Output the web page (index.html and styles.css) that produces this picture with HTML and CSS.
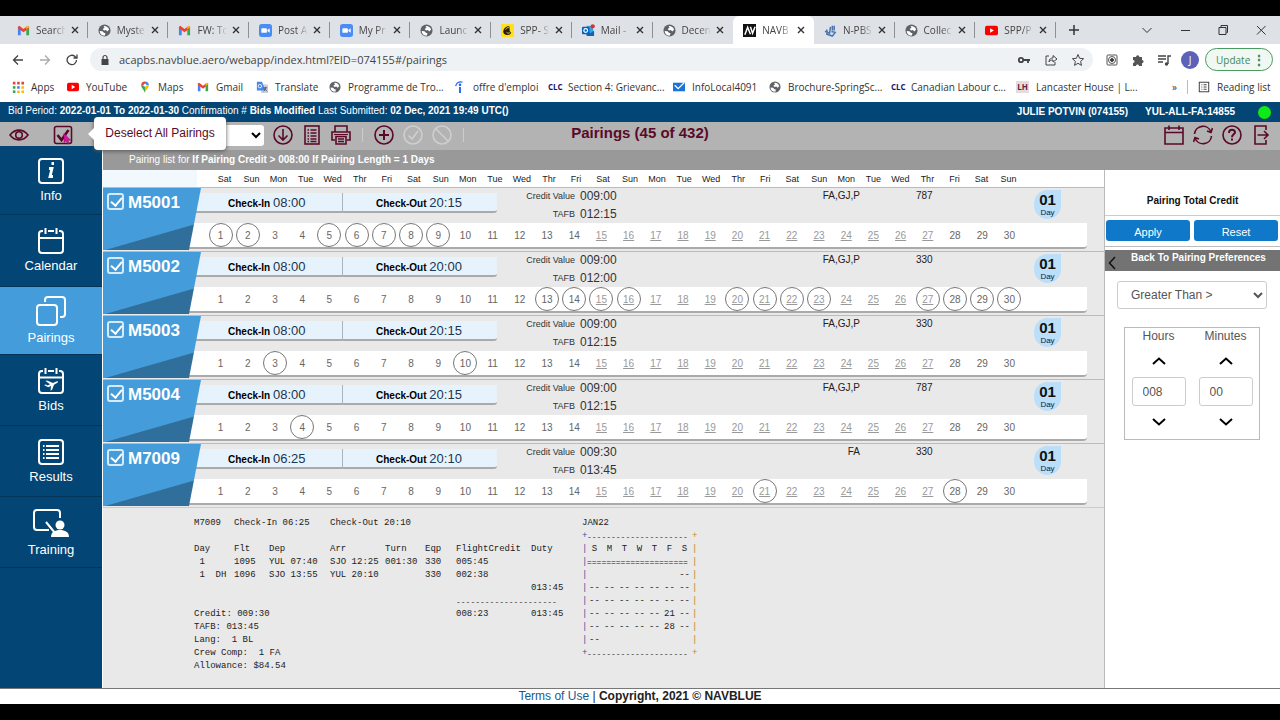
FILE: index.html
```html
<!DOCTYPE html>
<html lang="en">
<head>
<meta charset="utf-8">
<title>NAVBLUE PBS - Pairings</title>
<link rel="stylesheet" href="styles.css">
</head>
<body>
<svg class="defs" aria-hidden="true">
  <symbol id="gmail" viewBox="0 0 14 14"><path d="M1 12V3.500L4 6v6z" fill="#4285f4"/><path d="M10 12V6l3-2.500V12z" fill="#34a853"/><path d="M1 4.500V3l1.500-1L7 5.500 11.500 2 13 3v1.500L7 9z" fill="#ea4335"/><path d="M10 6l3-2.500V3l-1.500-1L10 3z" fill="#fbbc04"/></symbol>
  <symbol id="globe" viewBox="0 0 14 14"><circle cx="7" cy="7" r="6.500" fill="#5f6368"/><path d="M1.800 7.500l3 .3 1.500 1.700 1.700.5-.5 2.500C4 12.500 2 11 1.800 7.500zM6 2.200c2-.6 5 .8 6 3.800L10 8 8.500 6.500 6.500 7 5 5.500 7 4z" fill="#fff"/></symbol>
  <symbol id="zoomcam" viewBox="0 0 14 14"><rect x="0" y="0" width="14" height="14" rx="3" fill="#4a8cf6"/><rect x="2.500" y="4.500" width="6" height="5" rx="1" fill="#fff"/><path d="M9 6.500l2.500-2v5L9 7.500z" fill="#fff"/></symbol>
  <symbol id="youtube" viewBox="0 0 14 14"><rect x="0" y="2" width="14" height="10" rx="2" fill="#f00"/><path d="M5.500 4.500L9.500 7l-4 2.500z" fill="#fff"/></symbol>
  <symbol id="chimp" viewBox="0 0 14 14"><rect width="14" height="14" rx="1" fill="#ffe01b"/><path d="M9 2.500c-3-1-6 2-6.500 5C2 10 4 12 7 11.800c2.500 0 4-1.800 4-3L9.500 8z" fill="#241c15"/><path d="M5 6c1-2 2.500-2.500 3.500-2M6 9c1 1.200 3 1 4 0" stroke="#ffe01b" fill="none"/></symbol>
  <symbol id="outlook" viewBox="0 0 14 14"><path d="M5 2h7v10H5z" fill="#28a8ea"/><path d="M5 7l4 3 4-3v6H5z" fill="#1066b5"/><rect y="3" width="8" height="8" rx="1" fill="#0a5fb8"/><circle cx="4" cy="7" r="2" fill="none" stroke="#fff" stroke-width="1.300"/><circle cx="11.500" cy="2.500" r="2.300" fill="#d13438"/></symbol>
  <symbol id="nav" viewBox="0 0 14 14"><rect width="14" height="14" fill="#111"/><path d="M2 11.500L5 3.500l3 7.500M8 3l2.300 7L13 3" fill="none" stroke="#fff" stroke-width="1.600"/></symbol>
  <symbol id="npbs" viewBox="0 0 14 14"><path d="M1 8l5 2 1-7M3 6v5l6 2 3-4-4-1M9 2v5M11 2v5" fill="none" stroke="#4a74b0" stroke-width="1.600"/></symbol>
  <symbol id="chev-up" viewBox="0 0 16 10"><path d="M2 8l6-5.500L14 8" fill="none" stroke="currentColor" stroke-width="2"/></symbol>
  <symbol id="chev-down" viewBox="0 0 16 10"><path d="M2 2l6 5.500L14 2" fill="none" stroke="currentColor" stroke-width="2"/></symbol>
</svg>

<header class="browser">
  <div class="tabstrip">
    <div class="tabs" id="tabs"></div>
    <button class="newtab" aria-label="New tab"><svg viewBox="0 0 10 10"><path d="M5 0v10M0 5h10" stroke="#333" stroke-width="1.500"/></svg></button>
    <div class="window-controls">
      <svg viewBox="0 0 12 12"><path d="M1.500 4L6 8.500 10.500 4" /></svg>
      <svg viewBox="0 0 12 12"><path d="M2 6.500h9"/></svg>
      <svg viewBox="0 0 12 12"><path d="M2 3.500h7v7H2zM4 3V1.500h6.500v7H9.500"/></svg>
      <svg viewBox="0 0 12 12"><path d="M2 2l8.500 8.500M10.500 2L2 10.500"/></svg>
    </div>
  </div>
  <div class="addressbar">
    <button class="nav-btn" aria-label="Back"><svg viewBox="0 0 12 12"><path d="M11 6H1.500M6 1.500L1.500 6 6 10.500"/></svg></button>
    <button class="nav-btn off" aria-label="Forward"><svg viewBox="0 0 12 12"><path d="M1 6h9.500M6 1.500L10.500 6 6 10.500"/></svg></button>
    <button class="nav-btn" aria-label="Reload"><svg viewBox="0 0 12 12"><path d="M10.500 6A4.700 4.700 0 1 1 9 2.500L10.500 4M11 .5V4H7.500"/></svg></button>
    <div class="omnibox">
      <svg class="lock" viewBox="0 0 10 12"><path d="M1.500 5h7v6h-7z" fill="#444"/><path d="M3 5V3.500a2 2 0 0 1 4 0V5" fill="none" stroke="#444" stroke-width="1.200"/></svg>
      <input aria-label="Address" value="acapbs.navblue.aero/webapp/index.html?EID=074155#/pairings">
      <svg viewBox="0 0 14 14"><circle cx="4" cy="7" r="2.200" stroke-width="1.800"/><path d="M6.500 7H13M11 7v3" stroke-width="1.800"/></svg>
      <svg viewBox="0 0 14 14"><path d="M5 3H2v9h9V9M5 9c0-3 2-4 4-4V2.500L13 6 9 9V7C7 7 6 7.500 5 9z"/></svg>
      <svg viewBox="0 0 14 14"><path d="M7 1.500l1.600 3.800 4 .4-3 2.700.9 4L7 10.300l-3.500 2.100.9-4-3-2.700 4-.4z"/></svg>
    </div>
    <div class="extensions">
      <svg viewBox="0 0 14 14"><rect x="2" y="2" width="10" height="10" rx="1" stroke="#555"/><circle cx="7" cy="7" r="3.500" stroke="#555"/><circle cx="7" cy="7" r="1.500" fill="#333"/></svg>
      <svg viewBox="0 0 14 14"><path d="M2 4h3a1.700 1.700 0 1 1 3.400 0H11v3a1.600 1.600 0 1 1 0 3.200V13H8c0-2-3-2-3 0H2v-3c2 0 2-3 0-3z" fill="#555" stroke="none"/></svg>
      <svg viewBox="0 0 14 14"><path d="M1 3h8M1 6h8M1 9h5M11 11V3h3" stroke-width="1.400"/><circle cx="9.500" cy="11" r="1.700" fill="#444" stroke="none"/></svg>
    </div>
    <span class="avatar">J</span>
    <button class="update">Update <span class="dots">⋮</span></button>
  </div>
  <nav class="bookmarks" aria-label="Bookmarks">
    <a href="#"><svg viewBox="0 0 14 14"><g fill="#ea4335"><path d="M1 1h3v3H1zM6 1h3v3H6zM11 1h3v3h-3z"/></g><path d="M1 6h3v3H1z" fill="#34a853"/><path d="M6 6h3v3H6z" fill="#4285f4"/><path d="M11 6h3v3h-3zM6 11h3v3H6zM11 11h3v3h-3z" fill="#fbbc04"/><path d="M1 11h3v3H1z" fill="#34a853"/></svg>Apps</a>
    <a href="#"><svg><use href="#youtube"/></svg>YouTube</a>
    <a href="#"><svg viewBox="0 0 14 14"><path d="M7 14C6 10 2.500 8.500 2.500 5L7 5z" fill="#34a853"/><path d="M2.500 5A4.500 4.500 0 0 1 7 .5V5z" fill="#ea4335"/><path d="M7 .5A4.500 4.500 0 0 1 11.500 5H7z" fill="#4285f4"/><path d="M11.500 5C11.500 8.500 8 10 7 14V5z" fill="#fbbc04"/><circle cx="7" cy="5" r="1.700" fill="#fff"/></svg>Maps</a>
    <a href="#"><svg><use href="#gmail"/></svg>Gmail</a>
    <a href="#"><svg viewBox="0 0 14 14"><rect x="6" y="4" width="8" height="10" rx="1" fill="#c9ced6"/><path d="M1 1h6l4 10H1z" fill="#4a86e8"/><circle cx="4.500" cy="6" r="2" fill="none" stroke="#fff"/><path d="M9 8h4M11 7v1c0 2-1 3-2 4M10 9l3 3" stroke="#456" fill="none"/></svg>Translate</a>
    <a href="#"><svg><use href="#globe"/></svg>Programme de Tro...</a>
    <a href="#"><svg viewBox="0 0 14 14"><circle cx="7" cy="4.500" r="1.500" fill="#2164f3"/><path d="M7 7v7" stroke="#2164f3" stroke-width="2.200"/><path d="M2 6c.5-4 4-6 8-4.500" fill="none" stroke="#2164f3" stroke-width="1.400"/></svg>offre d'emploi</a>
    <a href="#"><span class="clc">CLC</span>Section 4: Grievanc...</a>
    <a href="#"><svg viewBox="0 0 14 14"><path d="M0 2h14v10H0z" fill="#1a73d9"/><path d="M2 5l4 4 7-7" fill="none" stroke="#fff" stroke-width="1.500"/></svg>InfoLocal4091</a>
    <a href="#"><svg><use href="#globe"/></svg>Brochure-SpringSc...</a>
    <a href="#"><span class="clc">CLC</span>Canadian Labour c...</a>
    <a href="#"><span class="lh">LH</span>Lancaster House | L...</a>
    <span class="more">»</span>
    <a class="reading" href="#"><svg viewBox="0 0 14 14"><path d="M1.500 1.500h11v11h-11zM4 4.500h1M6.500 4.500H10M4 7h1M6.500 7H10M4 9.500h1M6.500 9.500H10" fill="none" stroke="#444" stroke-width="1.200"/></svg>Reading list</a>
  </nav>
</header>

<div class="bidbar">
  <p>Bid Period: <b>2022-01-01 To 2022-01-30</b> Confirmation # <b>Bids Modified</b> Last Submitted: <b>02 Dec, 2021 19:49 UTC()</b></p>
  <p class="user"><b>JULIE POTVIN (074155)</b><b>YUL-ALL-FA:14855</b><span class="status"></span></p>
</div>

<div class="toolbar">
  <div class="tools">
    <button class="tool eye" aria-label="View"><svg viewBox="0 0 20 20"><path d="M1 10c5-6.500 13-6.500 18 0-5 6.500-13 6.500-18 0z"/><circle cx="10" cy="10" r="3.300"/></svg></button>
    <div class="deselect">
      <button class="tool" aria-label="Deselect All Pairings"><svg viewBox="0 0 20 20"><rect x="1.500" y="1.500" width="17" height="17" rx="2"/><path d="M4.500 10l4 5 7-10" stroke-width="2.600"/><path d="M11 8.500v9l2.200-1.800 1.600 3.300 1.500-.8-1.500-3h2.700z" fill="#e010a8" stroke="#7a0c50" stroke-width=".5"/></svg></button>
      <div class="tip" role="tooltip">Deselect All Pairings</div>
    </div>
    <select class="tool-select" aria-label="Sort"><option></option></select>
    <button class="tool" aria-label="Download"><svg viewBox="0 0 20 20"><circle cx="10" cy="10" r="9"/><path d="M10 4v11M5.500 10.500L10 15l4.500-4.500"/></svg></button>
    <button class="tool" aria-label="List"><svg viewBox="0 0 20 20"><rect x="3" y="1" width="14" height="18"/><path d="M5.500 5h1.500M8.500 5h6M5.500 8h1.500M8.500 8h6M5.500 11h1.500M8.500 11h6M5.500 14h1.500M8.500 14h6M5.500 16.500h1.500M8.500 16.500h6" stroke-width="1.500"/></svg></button>
    <button class="tool" aria-label="Print"><svg viewBox="0 0 20 20"><path d="M4 7V1h12v6M4 15H1V7h18v8h-3M5 11.500h10V19H5zM7 14h6M7 16.500h6"/><path d="M3 9.500h14" stroke-width="1"/></svg></button>
    <i class="sep"></i>
    <button class="tool" aria-label="Add"><svg viewBox="0 0 20 20"><circle cx="10" cy="10" r="9"/><path d="M10 5v10M5 10h10" stroke-width="2"/></svg></button>
    <button class="tool off" disabled aria-label="Approve"><svg viewBox="0 0 20 20"><circle cx="10" cy="10" r="9"/><path d="M5.500 10.500L9 14l6-8"/></svg></button>
    <button class="tool off" disabled aria-label="Cancel"><svg viewBox="0 0 20 20"><circle cx="10" cy="10" r="9"/><path d="M4 4l12 12"/></svg></button>
    <i class="sep"></i>
  </div>
  <h1>Pairings (45 of 432)</h1>
  <div class="tools right">
    <button class="tool" aria-label="Calendar"><svg viewBox="0 0 20 20"><path d="M1 3h18v16H1zM1 7.500h18M5 .5V5M15 .5V5"/></svg></button>
    <button class="tool" aria-label="Refresh"><svg viewBox="0 0 20 20"><path d="M1.500 9A8.500 8.500 0 0 1 18 7M19.500 3L18 7.500 14 6M18.500 11A8.500 8.500 0 0 1 2 13M.5 17L2 12.500 6 14"/></svg></button>
    <button class="tool" aria-label="Help"><svg viewBox="0 0 20 20"><circle cx="10" cy="10" r="9"/><path d="M7 8c0-4.500 6-4 6-.8 0 2-3 2.300-3 5" stroke-width="2"/><path d="M10 13.500v2" stroke-width="2"/></svg></button>
    <button class="tool" aria-label="Log out"><svg viewBox="0 0 20 20"><path d="M15 5V1H4v18h11v-4M6.500 10H17M13 6l4 4-4 4"/></svg></button>
  </div>
</div>

<div class="app">
  <nav class="sidebar" aria-label="Sections">
    <a href="#"><svg viewBox="0 0 26 26"><rect x="1" y="1" width="24" height="24" rx="3"/><path d="M11 10.500h3l-2 8h3" stroke-width="2.800"/><path d="M13.500 5.500h2.500" stroke-width="3"/></svg>Info</a>
    <a href="#"><svg viewBox="0 0 26 26"><path d="M5 3H4a3 3 0 0 0-3 3v16a3 3 0 0 0 3 3h18a3 3 0 0 0 3-3V6a3 3 0 0 0-3-3h-1M10 3h6M1 10h24M7.500 0v6M18.500 0v6"/></svg>Calendar</a>
    <a href="#" class="active"><svg class="wide" viewBox="0 0 30 30"><rect x="1" y="9" width="20" height="20" rx="3"/><path d="M9 6V4a3 3 0 0 1 3-3h14a3 3 0 0 1 3 3v14a3 3 0 0 1-3 3h-2"/></svg>Pairings</a>
    <a href="#"><svg viewBox="0 0 26 26"><path d="M5 3H4a3 3 0 0 0-3 3v16a3 3 0 0 0 3 3h18a3 3 0 0 0 3-3V6a3 3 0 0 0-3-3h-1M10 3h6M1 9.500h24M7.500 0v6M18.500 0v6"/><path d="M6 17l2-.5 1.500 1 2.500-1.200L7.500 13l1.500-.6 6 2.500c1.500-.8 4.500-2.400 5-1.500s-2.500 2.400-4 3.300L14 22l-1.500.5.500-4.500-2.800 1.300z" fill="#fff" stroke="none"/></svg>Bids</a>
    <a href="#"><svg viewBox="0 0 26 26"><rect x="1" y="1" width="24" height="24" rx="3"/><path d="M5 7h1.500M8 7h13M5 11h1.500M8 11h13M5 15h1.500M8 15h13M5 19h1.500M8 19h13"/></svg>Results</a>
    <a href="#"><svg class="board" viewBox="0 0 38 30"><path d="M17 22H5a3 3 0 0 1-3-3V5a3 3 0 0 1 3-3h20a3 3 0 0 1 3 3v5M14 14l9 11"/><circle cx="28" cy="17" r="4.500" fill="#fff" stroke="none"/><path d="M19 29c0-5 4-7 9-7s9 2 9 7z" fill="#fff" stroke="none"/></svg>Training</a>
  </nav>

  <main class="content">
    <p class="filter">Pairing list for <b>If Pairing Credit &gt; 008:00 If Pairing Length = 1 Days</b></p>
    <div class="split">
      <section class="pairings">
        <div class="weekdays" id="weekdays"></div>
        <div id="rows"></div>
        <div class="detail">
          <table class="legs">
            <colgroup><col class="w40"><col class="w35"><col class="w61"><col class="w55"><col class="w40"><col class="w31"><col class="w75"><col class="w51"></colgroup>
            <tr><td>M7009</td><td colspan="2">Check-In 06:25</td><td colspan="5">Check-Out 20:10</td></tr>
            <tr><td colspan="8">&nbsp;</td></tr>
            <tr><td>Day</td><td>Flt</td><td>Dep</td><td>Arr</td><td>Turn</td><td>Eqp</td><td>FlightCredit</td><td>Duty</td></tr>
            <tr><td> 1</td><td>1095</td><td>YUL 07:40</td><td>SJO 12:25</td><td>001:30</td><td>330</td><td>005:45</td><td></td></tr>
            <tr><td> 1  DH</td><td>1096</td><td>SJO 13:55</td><td>YUL 20:10</td><td></td><td>330</td><td>002:38</td><td></td></tr>
            <tr><td colspan="7"></td><td>013:45</td></tr>
            <tr><td colspan="6"></td><td colspan="2" class="rule">---------------------</td></tr>
            <tr><td colspan="6">Credit: 009:30</td><td>008:23</td><td>013:45</td></tr>
            <tr><td colspan="8">TAFB: 013:45</td></tr>
            <tr><td colspan="8">Lang:  1 BL</td></tr>
            <tr><td colspan="8">Crew Comp:  1 FA</td></tr>
            <tr><td colspan="8">Allowance: $84.54</td></tr>
          </table>
          <table class="month" id="month">
            <caption>JAN22</caption>
          </table>
        </div>
      </section>
      <aside class="panel">
        <h2>Pairing Total Credit</h2>
        <div class="actions"><button>Apply</button><button>Reset</button></div>
        <button class="back"><svg viewBox="0 0 8 14"><path d="M7 1L1.500 7 7 13" fill="none" stroke="#111" stroke-width="1.500"/></svg><span>Back To Pairing Preferences</span></button>
        <select class="compare" aria-label="Comparison"><option>Greater Than &gt;</option></select>
        <div class="clock">
          <div class="unit">
            <label for="hours">Hours</label>
            <button aria-label="More hours"><svg><use href="#chev-up"/></svg></button>
            <input id="hours" value="008">
            <button aria-label="Fewer hours"><svg><use href="#chev-down"/></svg></button>
          </div>
          <div class="unit">
            <label for="minutes">Minutes</label>
            <button aria-label="More minutes"><svg><use href="#chev-up"/></svg></button>
            <input id="minutes" value="00">
            <button aria-label="Fewer minutes"><svg><use href="#chev-down"/></svg></button>
          </div>
        </div>
      </aside>
    </div>
  </main>
</div>
<footer class="footer"><a href="#">Terms of Use</a> | <b>Copyright, 2021 © NAVBLUE</b></footer>
<script src="script.js"></script>
</body>
</html>
```

FILE: styles.css
```css
* { box-sizing: border-box; }

body {
  margin: 0;
  padding: 16px 0;
  min-height: 100vh;
  display: flex;
  flex-direction: column;
  background: #000;
  color: #222;
  font-family: "Liberation Sans", Arial, sans-serif;
  font-size: 10px;
}

p, h1, h2, dl, dd { margin: 0; }
button { padding: 0; border: 0; background: none; font: inherit; color: inherit; }
a { color: inherit; text-decoration: none; }
svg { display: block; flex: none; }
.defs { position: absolute; width: 0; height: 0; }

/* Browser window */
.browser { background: #fff; font-family: "Open Sans", "Noto Sans", sans-serif; color: #444; }
.tabstrip { display: flex; align-items: center; height: 28px; background: #dee1e6; padding-left: 7px; }
.tabs { display: flex; flex: 1; min-width: 0; height: 28px; align-items: stretch; }
.tab { flex: 1 1 0; min-width: 0; display: flex; align-items: center; padding: 0 9px 0 10px; position: relative; }
.tab svg { width: 13px; height: 13px; }
.tab .label {
  flex: 1; min-width: 0; margin: 0 5px 0 6px; overflow: hidden; white-space: nowrap;
  -webkit-mask-image: linear-gradient(90deg, #000 60%, transparent);
  mask-image: linear-gradient(90deg, #000 60%, transparent);
}
.tab .close svg { width: 8px; height: 8px; }
.tab::after { content: ""; position: absolute; right: 0; top: 6px; height: 16px; width: 1px; background: #8d9196; }
.tab.active { background: #fff; border-radius: 6px 6px 0 0; }
.tab.active::after, .tab:has(+ .active)::after { display: none; }
.newtab { flex: none; width: 36px; display: flex; justify-content: center; }
.newtab svg { width: 10px; height: 10px; }
.window-controls { flex: none; width: 188px; display: flex; justify-content: flex-end; gap: 26px; padding-right: 13px; }
.window-controls svg { width: 12px; height: 12px; fill: none; stroke: #333; }

.addressbar { display: flex; align-items: center; height: 31px; padding: 0 7px 0 12px; }
.nav-btn { width: 12px; margin-right: 15px; }
.nav-btn svg { width: 12px; height: 12px; fill: none; stroke: #444; stroke-width: 1.3; }
.nav-btn.off svg { stroke: #aaa; }
.omnibox { flex: 1; display: flex; align-items: center; gap: 13px; height: 23px; padding: 0 8px 0 10px; margin-left: -3px; border-radius: 12px; background: #eff2f4; }
.omnibox svg, .extensions svg { width: 14px; height: 14px; fill: none; stroke: #444; }
.omnibox svg.lock { width: 10px; height: 12px; margin-right: -4px; stroke: none; }
.omnibox input { flex: 1; min-width: 0; padding: 0; border: 0; background: none; font: inherit; font-size: 11px; color: #444; }
.extensions { display: flex; gap: 12px; margin: 0 10px 0 12px; }
.avatar { width: 18px; height: 18px; border-radius: 50%; background: #5c62b8; color: #fff; text-align: center; line-height: 18px; }
.update { display: flex; align-items: center; justify-content: space-between; width: 68px; height: 23px; margin-left: 6px; padding: 0 6px 0 10px; border: 1px solid #4a9a60; border-radius: 12px; background: #f1f8f3; color: #3d8a52; }
.update .dots { font-weight: bold; font-size: 14px; line-height: 14px; }

.bookmarks {
  display: grid; align-items: center; height: 27px; padding: 0 0 4px 12px;
  grid-template-columns: 55px 72px 58px 59px 73px 125px 94px 125px 96px 122px 125px 156px 1fr 83px;
  color: #333; white-space: nowrap;
}
.bookmarks a { display: flex; align-items: center; gap: 7px; }
.bookmarks svg { width: 12px; height: 12px; }
.clc, .lh { flex: none; width: 13px; font-size: 8px; font-weight: bold; line-height: 12px; }
.clc { color: #1c1470; }
.lh { background: #e4dde0; color: #6b2238; text-align: center; }
.bookmarks .reading { border-left: 1px solid #bbb; margin-left: -10px; padding-left: 10px; }

/* Application header */
.bidbar { display: flex; justify-content: space-between; height: 20px; padding: 0 9px 0 8px; line-height: 18px; background: #034574; color: #fff; white-space: nowrap; }
.user { display: flex; align-items: center; gap: 17px; }
.status { width: 13px; height: 13px; margin-left: 6px; border-radius: 50%; background: #10e818; }

.toolbar { display: grid; grid-template-columns: 1fr auto 1fr; height: 28px; background: #b3b3b3; color: #5a0a28; }
.toolbar h1 { font-size: 15px; line-height: 22px; }
.tools { display: flex; align-items: flex-start; padding: 3px 0 0 9px; gap: 9px; }
.tools.right { justify-content: flex-end; padding-right: 9px; }
.tool svg { width: 20px; height: 20px; fill: none; stroke: #5a0a28; stroke-width: 1.6; }
.tool.off svg { stroke: #cfcfcf; }
.deselect { position: relative; margin-left: 15px; }
.tip {
  position: absolute; left: 41px; top: -8px; z-index: 5; width: 132px; height: 33px;
  border-radius: 4px; background: #fff; box-shadow: 0 1px 4px #555;
  font-size: 12px; line-height: 32px; text-align: center; white-space: nowrap;
}
.tip::before { content: ""; position: absolute; left: -6px; top: 10px; border: 7px solid transparent; border-left: 0; border-right-color: #fff; }
.tool-select { width: 169px; height: 21px; margin-left: 13px; border: 0; border-radius: 3px; background: #fff; font-size: 13px; }
.sep { width: 1px; height: 14px; margin: 3px 2px 0; background: #ccc; }

/* Body layout */
.app { flex: 1; display: flex; background: #e9e9e9; }
.sidebar {
  position: relative; z-index: 1; flex: none; width: 102px; margin-top: -4px;
  display: grid; grid-template-rows: 69px 72px 68px 71px 71px 71px; align-content: start;
  background: #034574; color: #fff; font-size: 13px;
}
.sidebar a { display: flex; flex-direction: column; align-items: center; justify-content: center; gap: 4px; border-bottom: 1px solid #033459; line-height: 15px; }
.sidebar a.active { background: #459cdb; }
.sidebar svg { width: 26px; height: 26px; fill: none; stroke: #fff; stroke-width: 2; }
.sidebar svg.wide { width: 30px; height: 30px; }
.sidebar svg.board { width: 38px; height: 30px; }
.content { flex: 1; min-width: 0; display: flex; flex-direction: column; border-left: 1px solid #fff; }
.filter { height: 20px; padding-left: 26px; background: #999; color: #fff; line-height: 20px; }
.split { flex: 1; display: flex; }
.pairings { flex: 1; min-width: 0; }

.weekdays {
  display: grid; grid-template-columns: repeat(30, 1fr); height: 17px; padding: 0 82px 0 108px; text-align: center;
  background: linear-gradient(90deg, #f1f9fe 94px, #fff 94px); font-size: 9px; line-height: 18px;
}

/* Pairing rows */
.row { display: flex; height: 64px; border-top: 1px solid #bbb; }
.tag {
  position: relative; z-index: 1; flex: none; display: flex; align-items: flex-start; gap: 4px;
  width: 98px; height: 62px; padding: 5px 0 0 4px; color: #fff;
  font-size: 17px; font-weight: bold; line-height: 20px;
  clip-path: polygon(0 0, 100% 0, 86px 100%, 0 100%);
  background: linear-gradient(164deg, #459cdb 69%, #306f9c 70%);
}
.tag input { appearance: none; position: relative; width: 17px; height: 17px; margin: 0; border: 2px solid #d6ebfa; border-radius: 3px; }
.tag input:checked::after { content: ""; position: absolute; left: 4px; top: 0; width: 5px; height: 9px; border: solid #fff; border-width: 0 2px 2px 0; transform: rotate(40deg); }
.info { flex: 1; min-width: 0; margin-left: -12px; }
.summary { display: flex; height: 35px; }
.times { display: grid; grid-template-columns: 154px 1fr; width: 308px; height: 20px; margin-top: 5px; background: #e6f3fd; border-bottom: 2px solid #aaa; border-radius: 0 0 3px 0; line-height: 19px; color: #000; }
.times span { padding-left: 33px; }
.times span:first-child { padding-left: 39px; border-right: 1px solid #aab4bd; }
.times time { font-size: 13px; color: #1c3550; }
.credit { display: grid; grid-template-columns: 78px auto; gap: 2px 5px; align-content: start; line-height: 16px; color: #333; }
.credit dt { text-align: right; font-size: 9px; }
.credit dd { font-size: 12px; }
.crew { flex: 1; text-align: right; line-height: 16px; }
.craft { width: 118px; margin-left: 56px; line-height: 16px; }
.badge { width: 27px; height: 29px; margin: 2px 43px 0 0; border-radius: 14px 0 14px 14px; background: #bbdff8; text-align: center; font-size: 8px; line-height: 7px; color: #123; }
.badge b { display: block; font-size: 15px; line-height: 19px; color: #111; }
.days {
  display: grid; grid-template-columns: repeat(30, 1fr); height: 26px; margin-right: 17px; padding: 0 64px 0 18px;
  background: #fff; border-bottom: 2px solid #aaa; border-radius: 0 0 4px 0; color: #666; align-items: center; justify-items: center;
}
.days > * { width: 24px; height: 24px; line-height: 26px; text-align: center; }
.days u { color: #999; }
.days .ring { border: 1px solid #777; border-radius: 50%; line-height: 24px; }

/* Pairing detail */
.detail { display: flex; padding: 9px 0 14px 91px; border-top: 1px solid #ccc; color: #222; font-family: "Liberation Mono", monospace; font-size: 9px; line-height: 13px; white-space: pre; }
.detail table { border-collapse: collapse; table-layout: fixed; align-self: flex-start; }
.detail td { height: 13px; padding: 0; }
.detail .rule { font-size: 8px; }
.legs { width: 388px; }
.w31 { width: 31px; } .w35 { width: 35px; } .w40 { width: 40px; } .w51 { width: 51px; }
.w55 { width: 55px; } .w61 { width: 61px; } .w75 { width: 75px; }
.month { width: 115px; }
.month caption { text-align: left; }
.month col { width: 15px; }
.month col.side { width: 5px; }
.month .date { text-align: center; }
.month .left { color: #4550a0; }
.month .right { color: #b88a20; }

/* Preference panel */
.panel { flex: none; width: 176px; border-left: 1px solid #bbb; background: #fff; }
.panel::before { content: ""; display: block; height: 17px; }
.panel h2 { height: 29px; border-bottom: 1px solid #ccc; text-align: center; font-size: 10px; line-height: 28px; color: #111; }
.actions { display: grid; grid-template-columns: 1fr 1fr; gap: 4px; padding: 4px 2px 5px 1px; border-bottom: 1px solid #bbb; }
.actions button { height: 21px; border-radius: 3px; background: #0f78c8; color: #fff; font-size: 11px; line-height: 24px; }
.back { display: flex; gap: 12px; width: 100%; height: 21px; margin-top: 3px; padding-left: 3px; background: #737373; color: #fff; font-weight: bold; line-height: 15px; }
.back svg { width: 8px; height: 14px; margin: 6px 3px 0 0; }
.compare { display: block; width: 150px; height: 28px; margin: 10px 0 0 12px; padding-left: 9px; border: 1px solid #ccc; border-radius: 3px; background: #fff; font: inherit; font-size: 12px; color: #555; }
.clock { display: grid; grid-template-columns: 1fr 1fr; margin: 18px 20px 0 19px; border: 1px solid #bbb; }
.unit { display: flex; flex-direction: column; align-items: center; color: #555; font-size: 12px; line-height: 16px; }
.unit button { height: 18px; margin: 8px 0 7px; display: flex; align-items: center; color: #000; }
.unit button svg { width: 16px; height: 10px; }
.unit input { width: 54px; height: 29px; padding: 0 10px; border: 1px solid #ccc; border-radius: 3px; font: inherit; color: #555; }
.unit input + button { margin: 7px 0 8px; }

.footer { height: 16px; border-top: 1px solid #777; background: #fff; text-align: center; font-size: 12px; line-height: 15px; }
.footer a { color: #1d5a8c; }
```

FILE: script.js
```js
const tabs = [
  ["gmail", "Search"], ["globe", "Myste"], ["gmail", "FW: To"], ["zoomcam", "Post A"],
  ["zoomcam", "My Pr"], ["globe", "Launc"], ["chimp", "SPP- S"], ["outlook", "Mail -"],
  ["globe", "Decen"], ["nav", "NAVB", true], ["npbs", "N-PBS"], ["globe", "Collec"],
  ["youtube", "SPP/P"]
];
document.getElementById("tabs").innerHTML = tabs.map(([icon, label, active]) => `
  <div class="tab${active ? " active" : ""}">
    <svg><use href="#${icon}"/></svg><span class="label">${label}</span>
    <button class="close" aria-label="Close tab"><svg viewBox="0 0 8 8"><path d="M1 1l6 6M7 1L1 7" stroke="#333" stroke-width="1.4"/></svg></button>
  </div>`).join("");

const week = ["Sat", "Sun", "Mon", "Tue", "Wed", "Thr", "Fri"];
document.getElementById("weekdays").innerHTML =
  Array.from({ length: 30 }, (_, i) => `<span>${week[i % 7]}</span>`).join("");

const pairings = [
  { id: "M5001", start: "08:00", end: "20:15", credit: "009:00", tafb: "012:15", crew: "FA,GJ,P", craft: "787", days: [1, 2, 5, 6, 7, 8, 9] },
  { id: "M5002", start: "08:00", end: "20:00", credit: "009:00", tafb: "012:00", crew: "FA,GJ,P", craft: "330", days: [13, 14, 15, 16, 20, 21, 22, 23, 27, 28, 29, 30] },
  { id: "M5003", start: "08:00", end: "20:15", credit: "009:00", tafb: "012:15", crew: "FA,GJ,P", craft: "330", days: [3, 10] },
  { id: "M5004", start: "08:00", end: "20:15", credit: "009:00", tafb: "012:15", crew: "FA,GJ,P", craft: "787", days: [4] },
  { id: "M7009", start: "06:25", end: "20:10", credit: "009:30", tafb: "013:45", crew: "FA", craft: "330", days: [21, 28] }
];
const day = (n, on) => {
  const tag = n >= 15 && n <= 27 ? "u" : "span";
  return `<${tag}${on ? ' class="ring"' : ""}>${n}</${tag}>`;
};
document.getElementById("rows").innerHTML = pairings.map(p => `
  <article class="row">
    <label class="tag"><input type="checkbox" checked>${p.id}</label>
    <div class="info">
      <div class="summary">
        <div class="times"><span><b>Check-In</b> <time>${p.start}</time></span><span><b>Check-Out</b> <time>${p.end}</time></span></div>
        <dl class="credit"><dt>Credit Value</dt><dd>${p.credit}</dd><dt>TAFB</dt><dd>${p.tafb}</dd></dl>
        <div class="crew">${p.crew}</div>
        <div class="craft">${p.craft}</div>
        <div class="badge"><b>01</b>Day</div>
      </div>
      <div class="days">${Array.from({ length: 30 }, (_, i) => day(i + 1, p.days.includes(i + 1))).join("")}</div>
    </div>
  </article>`).join("");

const edge = (side, mark) => `<td class="${side}">${mark}</td>`;
const line = cells =>
  `<tr>${edge("left", "|")}${cells.map(c => `<td class="date">${c}</td>`).join("")}${edge("right", "|")}</tr>`;
const rule = (end, mark) =>
  `<tr>${edge("left", end)}<td colspan="7" class="rule">${mark.repeat(21)}</td>${edge("right", end)}</tr>`;
const cols = `<colgroup><col class="side">${"<col>".repeat(7)}<col class="side"></colgroup>`;
const blank = n => Array(n).fill("");
const dash = n => Array(n).fill("--");
document.getElementById("month").insertAdjacentHTML("beforeend", cols + "<tbody>"
  + rule("+", "-")
  + line(["S", "M", "T", "W", "T", "F", "S"])
  + rule("|", "=")
  + line([...blank(6), "--"])
  + line(dash(7))
  + line(dash(7))
  + line([...dash(5), "21", "--"])
  + line([...dash(5), "28", "--"])
  + line(["--", ...blank(6)])
  + rule("+", "-") + "</tbody>");
```
